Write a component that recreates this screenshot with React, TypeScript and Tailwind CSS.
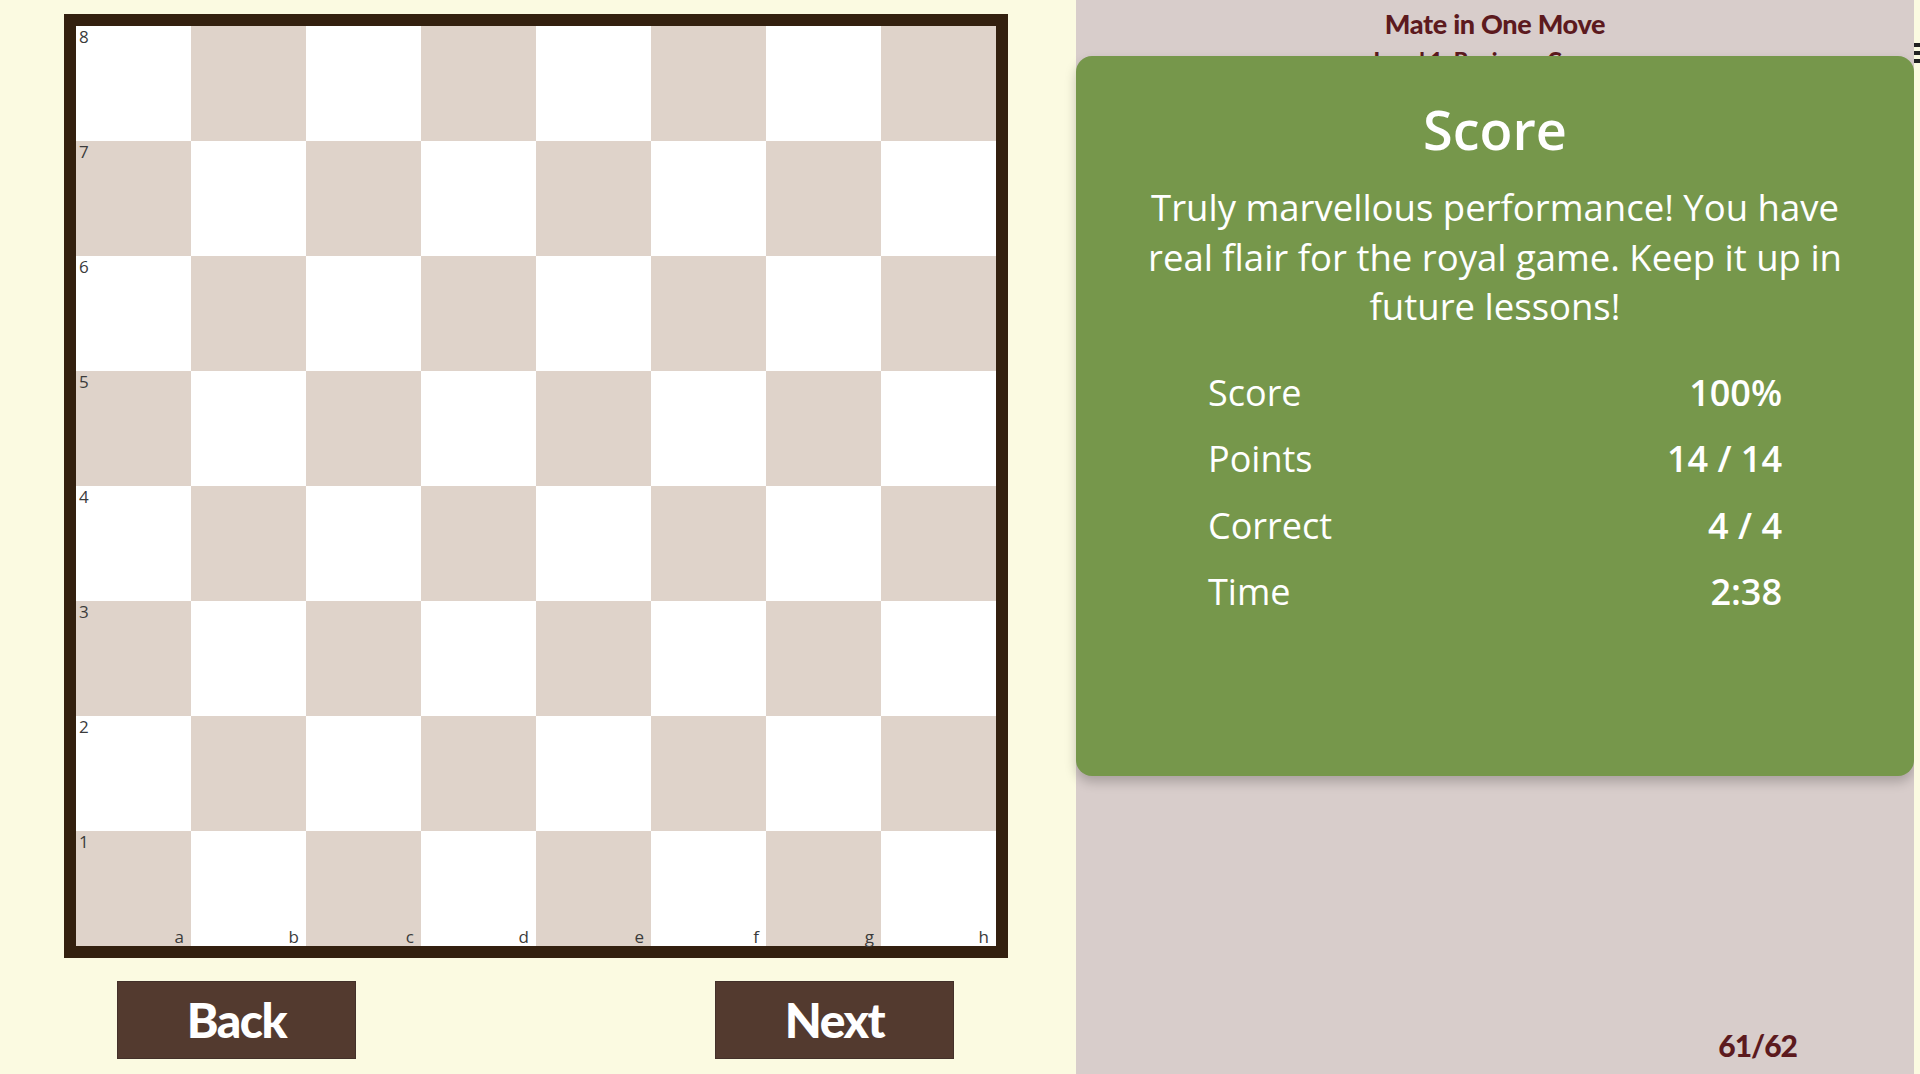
import React from "react";

const FILES = ["a", "b", "c", "d", "e", "f", "g", "h"];
const RANKS = [8, 7, 6, 5, 4, 3, 2, 1];

const STATS = [
  { label: "Score", value: "100%" },
  { label: "Points", value: "14 / 14" },
  { label: "Correct", value: "4 / 4" },
  { label: "Time", value: "2:38" },
];

function Board() {
  return (
    <div className="border-[12px] border-[#33200f] w-fit">
      <div className="grid grid-cols-[repeat(8,115px)] grid-rows-[repeat(8,115px)]">
        {RANKS.map((rank, r) =>
          FILES.map((file, f) => {
            const dark = (r + f) % 2 === 1;
            return (
              <div
                key={file + rank}
                className={`flex flex-col justify-between pl-[3px] pr-[7px] pt-[2px] pb-[1px] text-[17px] leading-none text-[#3b3b3b] font-['Open_Sans',sans-serif] ${
                  dark ? "bg-[#dfd3ca]" : "bg-white"
                }`}
              >
                <span className="self-start">{f === 0 ? rank : ""}</span>
                <span className="self-end">{r === 7 ? file : ""}</span>
              </div>
            );
          }),
        )}
      </div>
    </div>
  );
}

function NavButton({ label }: { label: string }) {
  return (
    <button
      type="button"
      className="flex h-[78px] w-[239px] items-center justify-center border border-[#43302a] bg-[#533a2f] font-['Lato',sans-serif] text-[48px] font-black tracking-[-1.5px] text-white"
    >
      {label}
    </button>
  );
}

export default function App() {
  return (
    <div className="flex h-[1074px] w-[1920px] overflow-hidden bg-[#fbfae1]">
      {/* left: board + nav */}
      <div className="flex w-[1076px] shrink-0 flex-col bg-[#fbfae1] pl-[64px] pt-[14px]">
        <Board />
        <div className="mt-[23px] flex gap-[359px] pl-[53px]">
          <NavButton label="Back" />
          <NavButton label="Next" />
        </div>
      </div>

      {/* right: score panel */}
      <div className="flex w-[838px] shrink-0 flex-col bg-[#d8cdcb]">
        <div className="h-[56px] overflow-hidden pt-[9px] text-center font-['Lato',sans-serif] font-black text-[#5c1a1e]">
          <p className="text-[27px] leading-[30px] tracking-[-0.3px]">Mate in One Move</p>
          <p className="mt-[10px] text-[22px] leading-[24px]">Level 1: Beginner Course</p>
        </div>

        <div className="h-[720px] rounded-2xl bg-[#76974b] pt-[41px] font-['Open_Sans',sans-serif] text-white shadow-[0_6px_12px_rgba(0,0,0,0.22)]">
          <h2 className="text-center text-[54px] font-semibold leading-[64px]">Score</h2>
          <p className="mt-[22px] px-[59px] text-center text-[36.5px] leading-[49.5px]">
            Truly marvellous performance! You have real flair for the royal game. Keep it up in future lessons!
          </p>
          <div className="mx-auto mt-[28px] w-[574px]">
            {STATS.map((s) => (
              <div key={s.label} className="flex justify-between text-[36px] leading-[66.5px]">
                <span>{s.label}</span>
                <span className="font-semibold">{s.value}</span>
              </div>
            ))}
          </div>
        </div>

        <div className="mt-auto flex justify-end pb-[11px] pr-[117px] font-['Lato',sans-serif] text-[30px] font-black leading-[36px] tracking-[-1px] text-[#5c1a1e]">
          61/62
        </div>
      </div>

      {/* cut-off strip on the right edge */}
      <div className="flex w-[6px] shrink-0 flex-col gap-[4px] overflow-hidden bg-[#fbfae1] pt-[43px]">
        <div className="h-[4px] w-[10px] bg-[#222]" />
        <div className="h-[4px] w-[10px] bg-[#222]" />
        <div className="h-[4px] w-[10px] bg-[#222]" />
      </div>
    </div>
  );
}
